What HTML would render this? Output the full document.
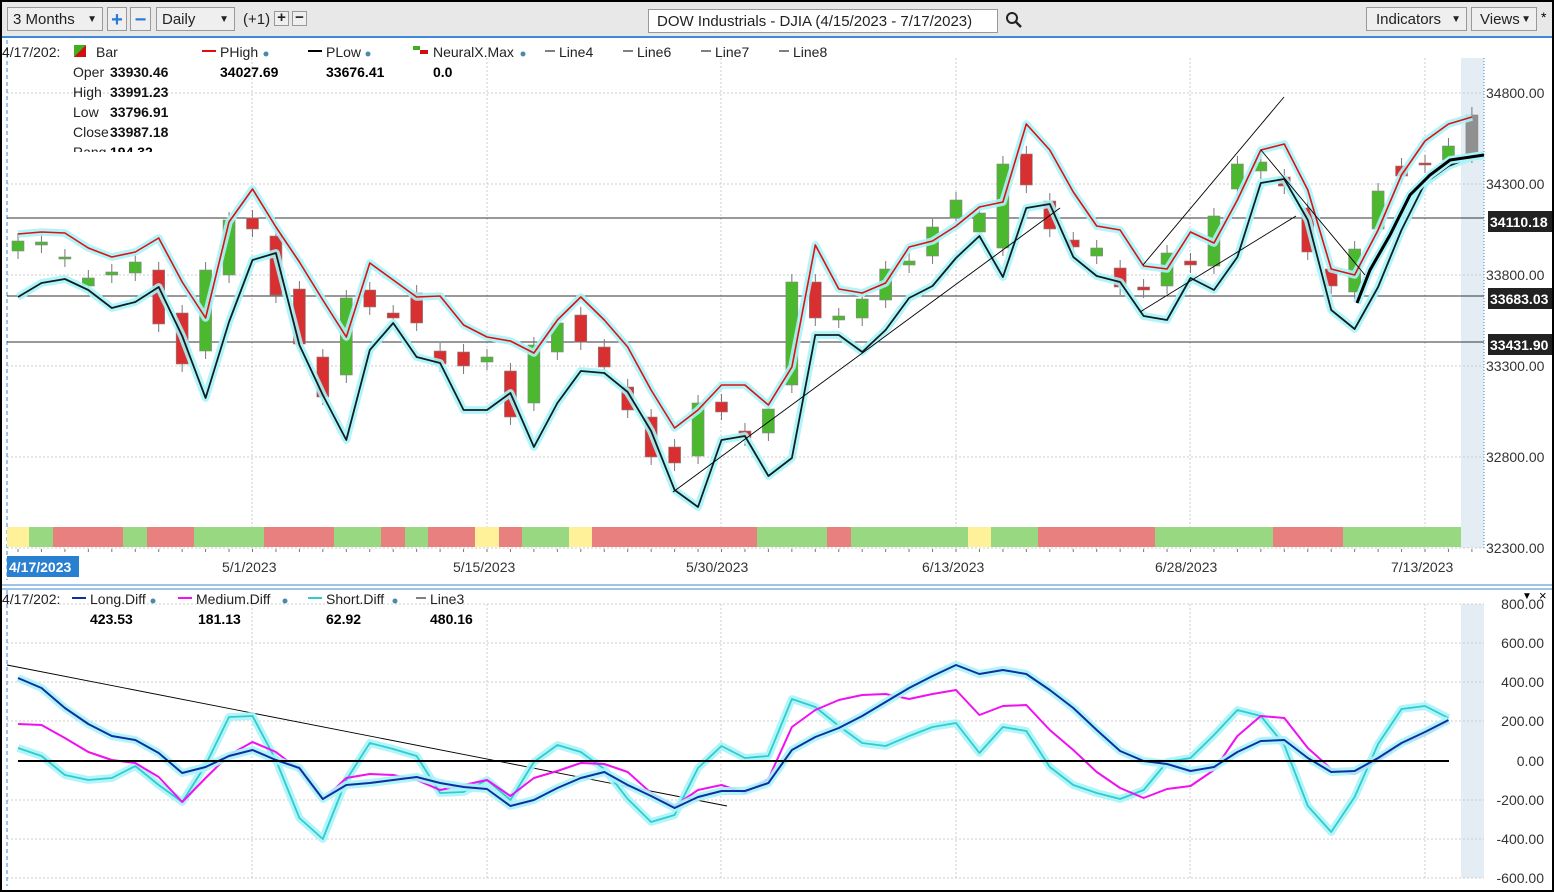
<!DOCTYPE html>
<html><head><meta charset="utf-8"><style>
*{margin:0;padding:0;box-sizing:border-box}
body{width:1554px;height:892px;overflow:hidden;background:#fff;font-family:"Liberation Sans",sans-serif;position:relative}
.tb{position:absolute;left:0;top:0;width:1554px;height:38px;background:#e8e8e8;border-top:2px solid #000;border-bottom:2px solid #3c8ad8}
.bx{position:absolute;border:1px solid #999;background:#efefef;font-size:15px;color:#222;height:24px;line-height:24px;padding-left:5px}
.ar{position:absolute;right:5px;top:0;font-size:10px}
svg{position:absolute;left:0;top:0}
</style></head><body>
<div class="tb">
 <div class="bx" style="left:7px;top:5px;width:96px">3 Months<span class="ar">▼</span></div>
 <div class="bx" style="left:107px;top:5px;width:20px;padding:0;text-align:center;color:#2a7ad8;font-weight:bold;font-size:20px">+</div>
 <div class="bx" style="left:130px;top:5px;width:21px;padding:0;text-align:center;color:#2a7ad8;font-weight:bold;font-size:20px">−</div>
 <div class="bx" style="left:156px;top:5px;width:79px">Daily<span class="ar">▼</span></div>
 <div style="position:absolute;left:243px;top:9px;font-size:15px;color:#222">(+1)</div>
 <div class="bx" style="left:274px;top:9px;width:15px;height:15px;padding:0;line-height:12px;text-align:center;font-weight:bold;font-size:15px">+</div>
 <div class="bx" style="left:292px;top:9px;width:15px;height:15px;padding:0;line-height:12px;text-align:center;font-weight:bold;font-size:15px">−</div>
 <div class="bx" style="left:648px;top:7px;width:350px;background:#fff;font-size:15px;padding-left:8px">DOW Industrials - DJIA (4/15/2023 - 7/17/2023)</div>
 <svg style="left:1005px;top:9px" width="18" height="18"><circle cx="7" cy="7" r="5" fill="none" stroke="#222" stroke-width="2"/><line x1="11" y1="11" x2="16" y2="16" stroke="#222" stroke-width="2.5"/></svg>
 <div class="bx" style="left:1366px;top:5px;width:101px;padding-left:9px">Indicators<span class="ar">▼</span></div>
 <div class="bx" style="left:1471px;top:5px;width:66px;padding-left:8px">Views<span class="ar">▼</span></div>
 <div style="position:absolute;left:1541px;top:7px;font-size:14px">*</div>
</div>
<svg id="c" width="1554" height="892" style="top:0"></svg>
<div style="position:absolute;left:0;top:0;width:1554px;height:892px;border:2px solid #000;border-top:none;pointer-events:none"></div>
<script>
const S=document.getElementById('c');let h='';
const X=i=>18+23.45*i;
h+='<rect x="1461" y="58" width="23" height="490" fill="#e4ecf4"/><rect x="1461" y="604" width="23" height="274" fill="#e4ecf4"/>';
[93,184,275,366,457,548].forEach(y=>h+=`<line x1="7" y1="${y}" x2="1484" y2="${y}" stroke="#ccc" stroke-dasharray="2,2"/>`);
[604,643,682,721,800,839,878].forEach(y=>h+=`<line x1="7" y1="${y}" x2="1484" y2="${y}" stroke="#ccc" stroke-dasharray="2,2"/>`);
[252,487,721,956,1190,1425].forEach(x=>{h+=`<line x1="${x}" y1="58" x2="${x}" y2="548" stroke="#ccc" stroke-dasharray="2,2"/><line x1="${x}" y1="604" x2="${x}" y2="878" stroke="#ccc" stroke-dasharray="2,2"/>`});
h+='<line x1="7" y1="40" x2="7" y2="580" stroke="#3c8ad8" stroke-dasharray="4,3"/><line x1="7" y1="590" x2="7" y2="886" stroke="#3c8ad8" stroke-dasharray="4,3"/>';
h+='<line x1="1484" y1="58" x2="1484" y2="548" stroke="#3c8ad8" stroke-dasharray="1,2"/>';
const st=[[7,29,'y'],[29,53,'g'],[53,123,'r'],[123,147,'g'],[147,194,'r'],[194,264,'g'],[264,334,'r'],[334,381,'g'],[381,405,'r'],[405,428,'g'],[428,475,'r'],[475,499,'y'],[499,522,'r'],[522,569,'g'],[569,592,'y'],[592,757,'r'],[757,827,'g'],[827,851,'r'],[851,968,'g'],[968,991,'y'],[991,1038,'g'],[1038,1155,'r'],[1155,1273,'g'],[1273,1343,'r'],[1343,1461,'g']];
const sc={y:'#fff09a',g:'#98d880',r:'#e88080'};
st.forEach(s=>h+=`<rect x="${s[0]}" y="527" width="${s[1]-s[0]}" height="20" fill="${sc[s[2]]}"/>`);
for(let i=0;i<63;i++)h+=`<line x1="${X(i)}" y1="549" x2="${X(i)}" y2="552" stroke="#777"/>`;
[218,296,342].forEach(y=>h+=`<line x1="7" y1="${y}" x2="1484" y2="${y}" stroke="#333"/>`);
const cd=[[241,251,'g'],[242,245,'g'],[257,259,'g'],[278,286,'g'],[272,275,'g'],[262,273,'g'],[270,324,'r'],[313,364,'r'],[270,351,'g'],[220,275,'g'],[218,229,'r'],[236,295,'r'],[289,344,'r'],[357,397,'r'],[298,375,'g'],[290,307,'r'],[313,318,'r'],[293,323,'r'],[351,364,'r'],[352,366,'r'],[357,362,'g'],[371,417,'r'],[345,403,'g'],[323,352,'g'],[315,342,'r'],[347,367,'r'],[387,410,'r'],[417,457,'r'],[447,463,'r'],[403,456,'g'],[402,412,'r'],[431,438,'r'],[409,433,'g'],[282,385,'g'],[282,318,'r'],[316,320,'g'],[299,318,'g'],[269,300,'g'],[261,265,'g'],[227,256,'g'],[200,218,'g'],[213,232,'g'],[164,248,'g'],[154,185,'r'],[201,229,'r'],[240,247,'r'],[248,256,'g'],[268,287,'r'],[287,290,'r'],[253,286,'g'],[261,265,'r'],[216,266,'g'],[164,189,'g'],[162,171,'g'],[177,186,'r'],[208,252,'r'],[269,286,'r'],[249,292,'g'],[191,229,'g'],[166,176,'r'],[163,165,'r'],[146,160,'g'],[115,155,'n']];
cd.forEach((c,i)=>{const x=X(i);const f=c[2]=='g'?'#4cb830':c[2]=='r'?'#d83030':'#909090';
h+=`<line x1="${x}" y1="${c[0]-8}" x2="${x}" y2="${c[1]+8}" stroke="#777"/><rect x="${x-6}" y="${c[0]}" width="12" height="${Math.max(2,c[1]-c[0])}" fill="${f}" stroke="#888" stroke-width=".6"/>`});
function pl(pts,col,w,glow){const p=pts.map((y,i)=>X(i).toFixed(1)+','+y).join(' ');
 if(glow)h+=`<polyline points="${p}" fill="none" stroke="#a8f4fa" stroke-width="${w+6}" stroke-linejoin="round" opacity=".9"/>`;
 h+=`<polyline points="${p}" fill="none" stroke="${col}" stroke-width="${w}" stroke-linejoin="round"/>`;}
pl([234,232,233,248,257,252,238,282,318,222,189,227,262,300,337,263,280,297,296,325,337,341,353,320,297,320,347,390,428,410,385,385,405,367,245,289,293,283,247,241,226,207,202,124,150,192,226,230,266,269,232,243,200,150,144,190,269,275,230,175,141,124,117],'#e01010',1.6,1);
pl([297,283,279,290,308,302,287,336,398,322,260,253,345,395,440,350,323,357,363,410,410,393,447,403,371,373,392,431,490,507,440,436,476,458,335,335,352,330,298,286,258,236,277,208,204,257,276,282,316,320,278,290,257,183,179,220,310,329,287,230,183,166,157],'#102020',1.8,1);
h+='<polyline points="1357,303 1370,270 1390,235 1410,195 1430,175 1450,160 1484,155" fill="none" stroke="#a8f4fa" stroke-width="8"/><polyline points="1357,303 1370,270 1390,235 1410,195 1430,175 1450,160 1484,155" fill="none" stroke="#000" stroke-width="3"/>';
[[673,492,1060,208],[1143,265,1284,97],[1140,312,1296,216],[1261,150,1365,275]].forEach(l=>h+=`<line x1="${l[0]}" y1="${l[1]}" x2="${l[2]}" y2="${l[3]}" stroke="#000" stroke-width=".9"/>`);
[[93,'34800.00'],[184,'34300.00'],[275,'33800.00'],[366,'33300.00'],[457,'32800.00'],[548,'32300.00']].forEach(a=>h+=`<text x="1486" y="${a[0]+5}" font-size="14" fill="#333">${a[1]}</text>`);
[[221,'34110.18'],[298,'33683.03'],[344,'33431.90']].forEach(a=>h+=`<rect x="1488" y="${a[0]-10}" width="66" height="21" fill="#222"/><text x="1490" y="${a[0]+6}" font-size="14" font-weight="bold" fill="#fff">${a[1]}</text>`);
h+='<rect x="7" y="556" width="72" height="21" fill="#2a80d0"/><text x="9" y="572" font-size="14" font-weight="bold" fill="#fff">4/17/2023</text>';
[[222,'5/1/2023'],[453,'5/15/2023'],[686,'5/30/2023'],[922,'6/13/2023'],[1155,'6/28/2023'],[1391,'7/13/2023']].forEach(a=>h+=`<text x="${a[0]}" y="572" font-size="14" fill="#333">${a[1]}</text>`);
h+='<line x1="0" y1="585" x2="1554" y2="585" stroke="#3c8ad8"/><line x1="0" y1="589" x2="1554" y2="589" stroke="#3c8ad8"/>';
h+='<text x="2" y="57" font-size="14" fill="#222">4/17/202:</text><path d="M74,45h12v12h-12z" fill="#d01010"/><path d="M74,45h12l-12,12z" fill="#40b020"/><text x="96" y="57" font-size="14" fill="#222">Bar</text>';
h+='<line x1="202" y1="51" x2="216" y2="51" stroke="#e01010" stroke-width="2"/><text x="220" y="57" font-size="14" fill="#222">PHigh</text><circle cx="266" cy="54" r="2.5" fill="#4a8aa8"/>';
h+='<line x1="308" y1="51" x2="322" y2="51" stroke="#000" stroke-width="2"/><text x="326" y="57" font-size="14" fill="#222">PLow</text><circle cx="368" cy="54" r="2.5" fill="#4a8aa8"/>';
h+='<rect x="413" y="46" width="7" height="4" fill="#40b020"/><rect x="420" y="50" width="8" height="4" fill="#d01010"/><text x="433" y="57" font-size="14" fill="#222">NeuralX.Max</text><circle cx="523" cy="54" r="2.5" fill="#4a8aa8"/>';
[[545,'Line4'],[623,'Line6'],[701,'Line7'],[779,'Line8']].forEach(a=>h+=`<line x1="${a[0]}" y1="51" x2="${a[0]+10}" y2="51" stroke="#000"/><text x="${a[0]+14}" y="57" font-size="14" fill="#222">${a[1]}</text>`);
[['Oper',77,'33930.46'],['High',97,'33991.23'],['Low',117,'33796.91'],['Close',137,'33987.18']].forEach(a=>h+=`<text x="73" y="${a[1]}" font-size="14" fill="#222">${a[0]}</text><text x="110" y="${a[1]}" font-size="14" font-weight="bold" fill="#111">${a[2]}</text>`);
h+='<svg x="0" y="142" width="200" height="10"><text x="73" y="15" font-size="14" fill="#222">Rang</text><text x="110" y="15" font-size="14" font-weight="bold">194.32</text></svg>';
h+='<text x="220" y="77" font-size="14" font-weight="bold">34027.69</text><text x="326" y="77" font-size="14" font-weight="bold">33676.41</text><text x="433" y="77" font-size="14" font-weight="bold">0.0</text>';
h+='<line x1="7" y1="665" x2="727" y2="806" stroke="#000" stroke-width=".9"/>';
pl([748,756,775,780,778,766,785,802,765,717,716,760,818,839,780,743,749,756,793,792,780,800,762,745,752,769,799,822,815,768,746,758,756,699,707,726,743,746,736,727,723,753,727,731,767,785,793,799,790,762,758,735,710,716,745,806,832,797,744,709,706,718],'#30cccc',1.8,1);
pl([724,725,738,752,760,763,777,802,778,755,742,752,770,800,778,774,775,780,790,785,780,796,778,771,763,764,772,793,806,790,785,793,779,727,710,700,695,694,699,694,690,715,706,705,730,750,772,788,798,789,786,770,736,716,718,748,769,774,760,744,735,721],'#f010f0',2,0);
pl([678,688,708,724,736,740,753,773,767,756,750,760,768,799,785,783,780,777,783,787,789,806,800,788,778,772,785,796,808,797,791,791,783,750,737,728,716,702,688,676,665,674,670,674,690,708,730,751,761,764,771,767,752,741,740,758,772,771,758,743,732,720],'#1030a0',2,1);
h+='<line x1="18" y1="761" x2="1449" y2="761" stroke="#000" stroke-width="2"/>';
[[604,'800.00'],[643,'600.00'],[682,'400.00'],[721,'200.00'],[761,'0.00'],[800,'-200.00'],[839,'-400.00'],[878,'-600.00']].forEach(a=>h+=`<text x="1544" y="${a[0]+5}" font-size="14" fill="#333" text-anchor="end">${a[1]}</text>`);
h+='<text x="1522" y="599" font-size="10">▼</text><text x="1539" y="600" font-size="13">×</text>';
h+='<text x="2" y="604" font-size="14" fill="#222">4/17/202:</text>';
[[72,'#1030a0','Long.Diff',150],[178,'#f010f0','Medium.Diff',282],[308,'#30cccc','Short.Diff',392]].forEach(a=>h+=`<line x1="${a[0]}" y1="598" x2="${a[0]+14}" y2="598" stroke="${a[1]}" stroke-width="2"/><text x="${a[0]+18}" y="604" font-size="14" fill="#222">${a[2]}</text><circle cx="${a[3]+3}" cy="601" r="2.5" fill="#4a8aa8"/>`);
h+='<line x1="416" y1="598" x2="426" y2="598" stroke="#000"/><text x="430" y="604" font-size="14" fill="#222">Line3</text>';
h+='<text x="90" y="624" font-size="14" font-weight="bold">423.53</text><text x="198" y="624" font-size="14" font-weight="bold">181.13</text><text x="326" y="624" font-size="14" font-weight="bold">62.92</text><text x="430" y="624" font-size="14" font-weight="bold">480.16</text>';
S.innerHTML=h;
</script>
</body></html>
